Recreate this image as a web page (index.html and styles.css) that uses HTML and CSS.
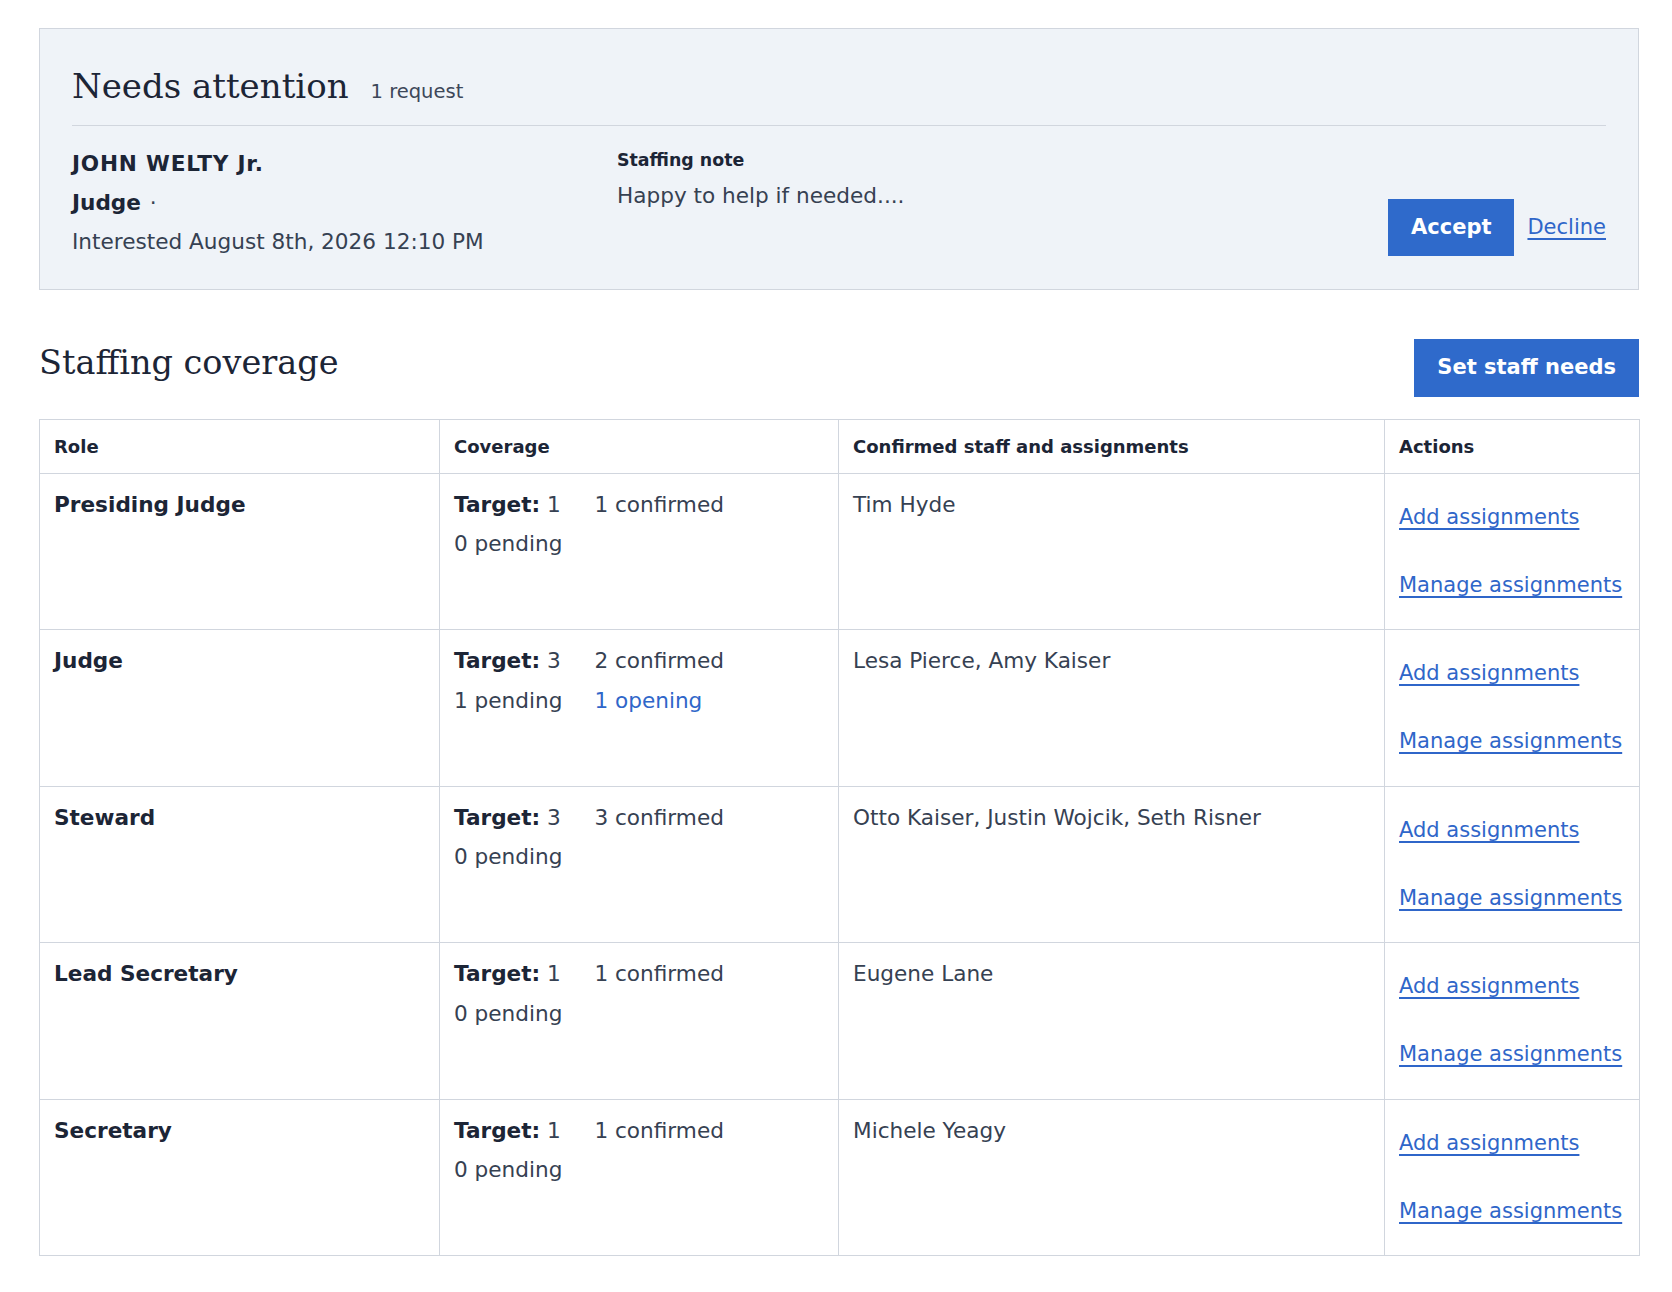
FILE: index.html
```html
<!DOCTYPE html>
<html lang="en">
<head>
  <meta charset="UTF-8" />
  <title>Staffing</title>
  <link rel="stylesheet" href="styles.css">
</head>
<body>
  <main class="page">

    <section class="attention">
      <div class="attention-head">
        <h2>Needs attention</h2>
        <span class="count">1 request</span>
      </div>
      <div class="request">
        <div class="person">
          <div class="name">JOHN WELTY Jr.</div>
          <div class="role"><strong>Judge</strong> <span class="dot">·</span></div>
          <div class="when">Interested August 8th, 2026 12:10 PM</div>
        </div>
        <div class="note">
          <div class="note-label">Staffing note</div>
          <div class="note-text">Happy to help if needed....</div>
        </div>
        <div class="request-actions">
          <button class="btn">Accept</button>
          <a href="#" class="link">Decline</a>
        </div>
      </div>
    </section>

    <section class="coverage">
      <div class="coverage-head">
        <h2>Staffing coverage</h2>
        <button class="btn">Set staff needs</button>
      </div>

      <table class="staff-table">
        <colgroup>
          <col class="c-role"><col class="c-cov"><col class="c-staff"><col class="c-act">
        </colgroup>
        <thead>
          <tr><th>Role</th><th>Coverage</th><th>Confirmed staff and assignments</th><th>Actions</th></tr>
        </thead>
        <tbody>
          <tr>
            <td class="role-name">Presiding Judge</td>
            <td><div class="cov"><span><b>Target:</b> 1</span><span>1 confirmed</span><span>0 pending</span></div></td>
            <td>Tim Hyde</td>
            <td class="acts"><a href="#" class="link">Add assignments</a><a href="#" class="link">Manage assignments</a></td>
          </tr>
          <tr>
            <td class="role-name">Judge</td>
            <td><div class="cov"><span><b>Target:</b> 3</span><span>2 confirmed</span><span>1 pending</span><span class="open">1 opening</span></div></td>
            <td>Lesa Pierce, Amy Kaiser</td>
            <td class="acts"><a href="#" class="link">Add assignments</a><a href="#" class="link">Manage assignments</a></td>
          </tr>
          <tr>
            <td class="role-name">Steward</td>
            <td><div class="cov"><span><b>Target:</b> 3</span><span>3 confirmed</span><span>0 pending</span></div></td>
            <td>Otto Kaiser, Justin Wojcik, Seth Risner</td>
            <td class="acts"><a href="#" class="link">Add assignments</a><a href="#" class="link">Manage assignments</a></td>
          </tr>
          <tr>
            <td class="role-name">Lead Secretary</td>
            <td><div class="cov"><span><b>Target:</b> 1</span><span>1 confirmed</span><span>0 pending</span></div></td>
            <td>Eugene Lane</td>
            <td class="acts"><a href="#" class="link">Add assignments</a><a href="#" class="link">Manage assignments</a></td>
          </tr>
          <tr>
            <td class="role-name">Secretary</td>
            <td><div class="cov"><span><b>Target:</b> 1</span><span>1 confirmed</span><span>0 pending</span></div></td>
            <td>Michele Yeagy</td>
            <td class="acts"><a href="#" class="link">Add assignments</a><a href="#" class="link">Manage assignments</a></td>
          </tr>
        </tbody>
      </table>
    </section>

  </main>
</body>
</html>
```

FILE: styles.css
```css
body {
  margin: 0;
  font-family: "DejaVu Sans", Verdana, sans-serif;
  font-size: 21.6px;
  line-height: 31.5px;
  color: #364152;
  background: #fff;
}
.page {
  width: 1600px;
  padding: 28px 0 0 39px;
}
h2 {
  font-family: "DejaVu Serif", Georgia, serif;
  font-weight: normal;
  font-size: 34px;
  line-height: 40px;
  color: #1c2536;
  margin: 0;
}
b, strong {
  color: #1c2536;
}

/* needs attention panel */
.attention {
  background: #eff3f8;
  border: 1px solid #d1d6de;
  padding: 37px 32px 32px;
}
.attention-head {
  display: flex;
  align-items: baseline;
  gap: 22px;
  padding-bottom: 17px;
  border-bottom: 1px solid #d1d6de;
}
.count {
  font-size: 19.5px;
  color: #3d4759;
}
.request {
  display: grid;
  grid-template-columns: 513px 1fr auto;
  column-gap: 32px;
  margin-top: 22px;
}
.person div + div {
  margin-top: 7.5px;
}
.name {
  font-weight: bold;
  color: #1c2536;
  letter-spacing: 0.8px;
}
.dot {
  margin-left: 2px;
}
.note-label {
  font-size: 17.4px;
  line-height: 23px;
  font-weight: bold;
  color: #1c2536;
  margin-top: 1px;
}
.note-text {
  margin-top: 8px;
}
.request-actions {
  display: flex;
  align-items: center;
  align-self: end;
  gap: 13px;
  margin-bottom: 1px;
}

.btn {
  font-family: inherit;
  font-size: 21px;
  line-height: 31.5px;
  font-weight: bold;
  color: #fff;
  background: #2f6acb;
  border: 0;
  border-radius: 0;
  padding: 13px 23px;
}
.link {
  font-size: 21px;
  color: #2f66c9;
  text-decoration: underline;
  text-decoration-thickness: 2px;
  text-underline-offset: 4px;
}

/* coverage */
.coverage {
  margin-top: 49px;
}
.coverage-head {
  display: flex;
  justify-content: space-between;
  align-items: center;
  margin-bottom: 22px;
}
.coverage-head h2 {
  font-size: 33.5px;
  margin-bottom: 10px;
}
.staff-table {
  width: 100%;
  border-collapse: collapse;
  table-layout: fixed;
}
.c-role { width: 400px; }
.c-cov { width: 399px; }
.c-staff { width: 546px; }
.c-act { width: 255px; }
.staff-table th,
.staff-table td {
  border: 1px solid #d1d6de;
  padding: 15px 14px;
  text-align: left;
  vertical-align: top;
}
.staff-table th {
  font-size: 18px;
  line-height: 23.4px;
  color: #1c2536;
}
.role-name {
  font-weight: bold;
  color: #1c2536;
}
.cov {
  display: grid;
  grid-template-columns: auto auto;
  justify-content: start;
  column-gap: 32px;
  row-gap: 8px;
}
.open {
  color: #2f66c9;
}
.acts .link {
  display: block;
  width: max-content;
  padding: 13px 0;
}
.acts .link + .link {
  margin-top: 10.5px;
}
```
